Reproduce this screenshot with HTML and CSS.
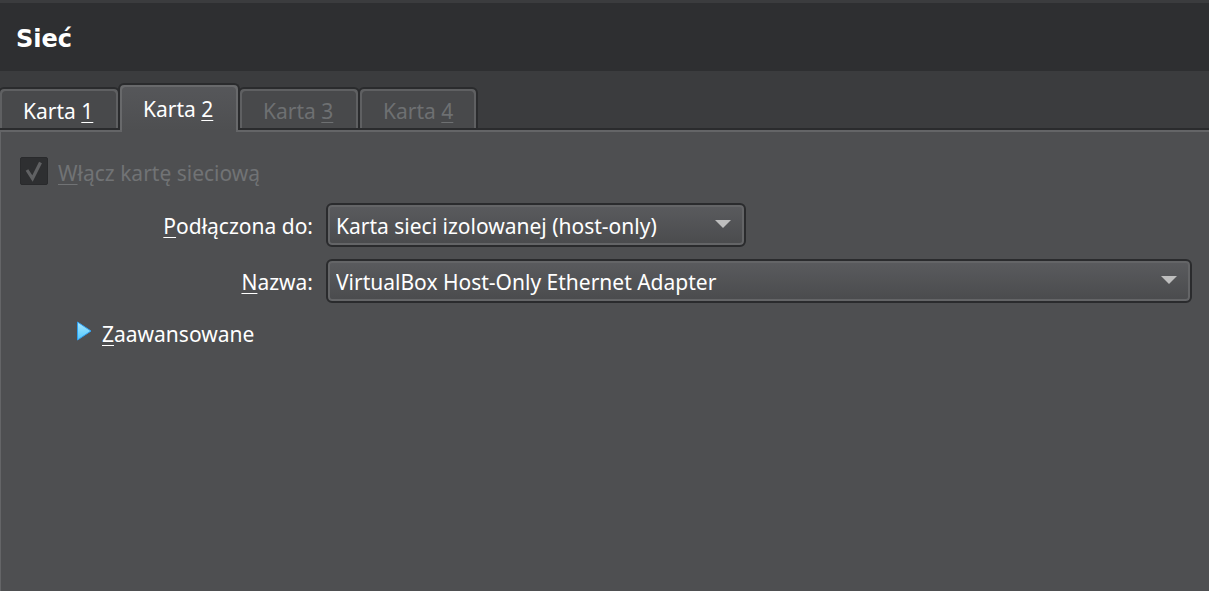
FILE: index.html
```html
<!DOCTYPE html>
<html lang="pl">
<head>
<meta charset="utf-8">
<title>Sieć</title>
<link rel="stylesheet" href="styles.css">
</head>
<body>
<header class="header"><h1 class="title">Sieć</h1></header>
<main class="settings">
  <div class="tabs" role="tablist">
    <button class="tab" role="tab" aria-selected="false">Karta <u>1</u></button>
    <button class="tab tab-active" role="tab" aria-selected="true">Karta <u>2</u></button>
    <button class="tab" role="tab" aria-selected="false" disabled>Karta <u>3</u></button>
    <button class="tab" role="tab" aria-selected="false" disabled>Karta <u>4</u></button>
  </div>
  <section class="panel" role="tabpanel">
    <div class="enable">
      <span class="check">
        <input class="check-input" type="checkbox" id="enable" checked disabled>
        <svg class="check-mark" viewBox="0 0 28 28" aria-hidden="true"><path d="M7 13 12.500 21.500 20.500 5.500" fill="none" stroke="#606163" stroke-width="3.200"/></svg>
      </span>
      <label class="enable-label" for="enable"><u>W</u>łącz kartę sieciową</label>
    </div>
    <div class="form">
      <label class="label" for="attached"><u>P</u>odłączona do:</label>
      <div class="combo combo-short">
        <select class="select" id="attached"><option>Karta sieci izolowanej (host-only)</option></select>
        <svg class="arrow" viewBox="0 0 16 8" aria-hidden="true"><path d="M0 0H16L8 8Z" fill="#bebebe"/></svg>
      </div>
      <label class="label" for="name"><u>N</u>azwa:</label>
      <div class="combo">
        <select class="select" id="name"><option>VirtualBox Host-Only Ethernet Adapter</option></select>
        <svg class="arrow" viewBox="0 0 16 8" aria-hidden="true"><path d="M0 0H16L8 8Z" fill="#bebebe"/></svg>
      </div>
    </div>
    <button class="advanced" aria-expanded="false">
      <svg class="advanced-icon" viewBox="0 0 16 20" aria-hidden="true">
        <defs><linearGradient id="blue" x1="0" y1="0" x2="0" y2="1"><stop offset="0" stop-color="#a9e8ff"/><stop offset="1" stop-color="#50c8ff"/></linearGradient></defs>
        <path d="M1.500 1 15 10 1.500 19Z" fill="url(#blue)" stroke="#2f9ff0"/>
      </svg>
      <span><u>Z</u>aawansowane</span>
    </button>
  </section>
</main>
</body>
</html>
```
FILE: styles.css
```css
* { box-sizing: border-box; }
body {
  margin: 0;
  min-height: 100vh;
  display: flex;
  flex-direction: column;
  background: #3b3c3e;
  color: #fff;
  font: 21px/28px "Noto Sans", sans-serif;
}
button, select { font: inherit; color: inherit; }
u { text-decoration-thickness: 1px; text-underline-offset: 3px; text-decoration-skip-ink: none; }
.header {
  margin-top: 3px;
  padding: 20px 16px 16px;
  background: #2e2f31;
}
.title { margin: 0; font: bold 24px/32px "DejaVu Sans", sans-serif; }
.settings { flex: 1; display: flex; flex-direction: column; }
.tabs {
  display: flex;
  align-items: flex-end;
  margin: 12px 0 0 -2px;
}
.tab {
  width: 122px;
  height: 43px;
  margin: 0 0 -2px;
  padding: 4px 0 0 23px;
  text-align: left;
  border: 2px solid #2a2b2d;
  border-radius: 6px 6px 0 0;
  background: #48494b;
  box-shadow: inset 2px 2px #5f6062, inset -2px 2px #5f6062;
}
.tab + .tab { margin-left: -2px; }
.tab:last-child { width: 120px; }
.tab:disabled { color: #6e7072; }
.tab-active {
  position: relative;
  z-index: 1;
  height: 47px;
  padding-top: 2px;
  border-bottom: 0;
  background: linear-gradient(#56575a, #4e4f51);
  box-shadow: inset 2px 2px #68696b, inset -2px 2px #68696b;
}
.tab-active::after {
  content: "";
  position: absolute;
  left: 2px;
  right: 2px;
  bottom: -2px;
  height: 2px;
  background: #4e4f51;
}
.panel {
  flex: 1;
  padding: 25px 17px 20px 19px;
  border-top: 2px solid #2a2b2d;
  background: #4e4f51;
  box-shadow: inset 1px 2px #646567;
}
.enable { display: flex; align-items: center; gap: 10px; padding-left: 1px; color: #717375; }
.enable-label { padding-top: 4px; }
.check { display: grid; width: 28px; height: 28px; }
.check-input, .check-mark { grid-area: 1 / 1; width: 28px; height: 28px; margin: 0; }
.check-input { appearance: none; border-radius: 2px; background: #2e2f31; border: 1px solid #292a2c; }
.check-mark { pointer-events: none; }
.form {
  display: grid;
  grid-template-columns: 294px 1fr;
  gap: 12px 13px;
  align-items: center;
  margin-top: 16px;
}
.label { padding-top: 2px; text-align: right; }
.combo { display: grid; align-items: center; }
.combo-short { max-width: 420px; }
.select, .arrow { grid-area: 1 / 1; }
.select {
  appearance: none;
  width: 100%;
  height: 44px;
  padding: 2px 40px 0 8px;
  border: 2px solid #2a2b2d;
  border-radius: 6px;
  background: linear-gradient(#5a5b5e, #4a4b4d);
  box-shadow: inset 0 0 0 2px #646567;
}
.arrow { width: 16px; height: 8px; justify-self: end; margin: 0 15px 2px 0; pointer-events: none; }
.advanced {
  display: flex;
  align-items: center;
  gap: 10px;
  margin: 17px 0 0 57px;
  padding: 0;
  border: 0;
  background: none;
}
.advanced-icon { width: 16px; height: 20px; margin-bottom: 6px; }
```
